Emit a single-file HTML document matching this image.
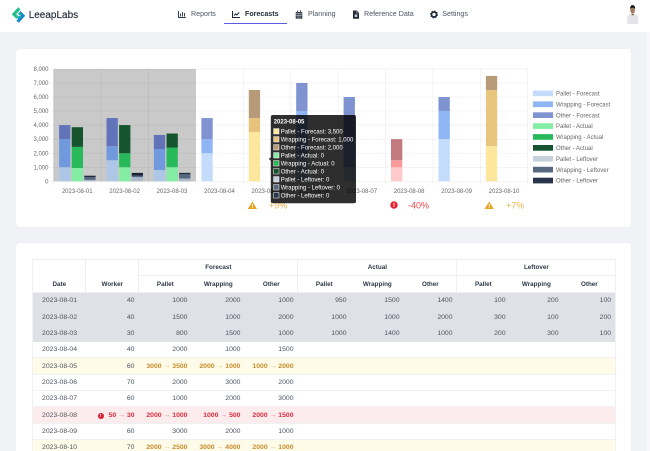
<!DOCTYPE html>
<html lang="en">
<head>
<meta charset="utf-8">
<title>LeeapLabs - Forecasts</title>
<style>
html,body{margin:0;padding:0;width:650px;height:451px;overflow:hidden;background:#f1f2f5}
body{font-family:"Liberation Sans",sans-serif;position:relative}
#wrap{position:absolute;left:0;top:0;width:650px;height:451px;overflow:hidden;filter:blur(.3px)}
.strip{position:absolute;left:647px;top:0;width:3px;height:451px;background:#f8f8fa}
.nav{position:absolute;left:0;top:0;width:650px;height:32px;background:#fff}
.brand{position:absolute;left:28.7px;top:9.5px;font-size:10px;line-height:12px;color:#1f2937;-webkit-text-stroke:.15px #1f2937}
.lnk{position:absolute;top:10.4px;font-size:7.1px;line-height:9px;color:#4b5563;white-space:nowrap}
.lnk.on{font-weight:bold;color:#1f2937}
.ico{position:absolute;top:10px;width:8px;height:9px}
.ul{position:absolute;left:224.3px;top:23.2px;width:62.4px;height:1.1px;background:#5b5be0}
.card{position:absolute;left:16px;width:615px;background:#fff;border-radius:4px;box-shadow:0 0 1px rgba(0,0,0,.06)}
#c1{top:49px;height:178px}
#c2{top:243px;height:230px}
svg{position:absolute;left:0;top:0}
table{position:absolute;left:32.3px;top:259px;width:583px;table-layout:fixed;border-collapse:collapse;font-size:6.85px;color:#4b5360;background:#fff}
th,td{padding:1px 4.3px 0;box-sizing:border-box;white-space:nowrap;overflow:hidden;line-height:8px}
th{color:#2f3846;font-weight:bold;font-size:6.3px;text-align:center;border:.5px solid #eff0f2}
th.b{vertical-align:bottom;padding-bottom:3.4px}
th.s{border-left-color:transparent;border-right-color:transparent}
th.l{border-right-color:transparent}
th.t{border-left-color:transparent}
td{text-align:right;border-bottom:.5px solid #f0f1f3}
td:first-child{border-left:.5px solid #f0f1f3}
td:last-child{border-right:.5px solid #f0f1f3}
td.d{text-align:center}
tr.g td{background:#dfe1e6;border-bottom:0}
tr.y td{background:#fefce8}
tr.r td{background:#fdeced}
.o{color:#c98a2c;font-weight:bold}
.e{color:#dc2b3c;font-weight:bold}
.a{font-weight:normal;opacity:.65}
.dot{display:inline-block;width:6px;height:6px;line-height:6px;border-radius:50%;background:#dc1f30;color:#fff;font-size:4.6px;text-align:center;vertical-align:0;margin-right:5px}
</style>
</head>
<body>
<div id="wrap">
<div class="strip"></div>
<div class="nav">
  <svg width="40" height="32" viewBox="0 0 40 32">
    <path d="M19.4 8.4 L14 14.2 L17.6 17.8" fill="none" stroke="#22c08a" stroke-width="3.2"/>
    <path d="M17.6 21.6 L23 15.8 L19.4 12.2" fill="none" stroke="#1488c8" stroke-width="3.2"/>
    <path d="M19.6 12.4 L21.4 14.2 L19.6 15.6 L17.8 13.8 Z" fill="#1fb7a4"/>
    <path d="M17.4 17.6 L19.6 15.6 L21 17.4 L18.8 19.8 Z" fill="#1a9fc0"/>
  </svg>
  <div class="brand">LeeapLabs</div>

  <svg class="ico" style="left:178px" viewBox="0 0 8 9"><path d="M.5 1v6.5H8" fill="none" stroke="#374151" stroke-width="1"/><path d="M2 3.5h1v3H2zM4 2h1v4.5H4zM6 3h1v3.5H6z" fill="#374151"/></svg>
  <div class="lnk" style="left:191px">Reports</div>

  <svg class="ico" style="left:232px" viewBox="0 0 8 9"><path d="M.5 1v6.5H8" fill="none" stroke="#1f2937" stroke-width="1"/><path d="M2 5.5 3.6 3.8 4.8 5 7.2 2.4" fill="none" stroke="#1f2937" stroke-width="1"/></svg>
  <div class="lnk on" style="left:245px">Forecasts</div>
  <div class="ul"></div>

  <svg class="ico" style="left:295px" viewBox="0 0 8 9"><path d="M2 .5h1V2h2V.5h1V2h1.3v6.8H.7V2H2z" fill="#374151"/><path d="M.7 3.6h6.6M.7 5.4h6.6M3 3.6v5M5 3.6v5" stroke="#fff" stroke-width=".35"/></svg>
  <div class="lnk" style="left:308px">Planning</div>

  <svg class="ico" style="left:351.5px" viewBox="0 0 8 9"><path d="M1 .5h3.8L7 2.7v6H1z" fill="#1f2937"/><path d="M4.6.8v2.2h2.2" fill="none" stroke="#fff" stroke-width=".4"/><path d="M2.7 4.4h2.6v2.6H2.7z" fill="#fff" opacity=".75"/></svg>
  <div class="lnk" style="left:364px">Reference Data</div>

  <svg class="ico" style="left:430px" viewBox="0 0 8 9"><circle cx="4" cy="4.5" r="2.5" fill="none" stroke="#1f2937" stroke-width="1.7"/><circle cx="4" cy="4.5" r="3.4" fill="none" stroke="#1f2937" stroke-width="1.1" stroke-dasharray="1.4 1.27"/></svg>
  <div class="lnk" style="left:442.3px">Settings</div>

  <svg width="650" height="32" viewBox="0 0 650 32">
    <path d="M627.2 24 V17.5 Q627.8 14.6 630.4 14 L634.8 14 Q637.8 15 638.2 18 L638.2 24 Z" fill="#e3e5e8"/>
    <ellipse cx="632.6" cy="10.4" rx="2.3" ry="3.4" fill="#a57a62"/>
    <path d="M630.2 9.6 Q629.8 5 632.7 5 Q635.4 5.2 635 9 L633.6 7.8 L631 8 Z" fill="#1c1a1c"/>
    <path d="M631 14h3.4l-1.7 1.6z" fill="#8a6450"/>
  </svg>
</div>

<div class="card" id="c1"></div>
<div class="card" id="c2"></div>

<svg width="650" height="240" viewBox="0 0 650 240" font-family="Liberation Sans, sans-serif">
  <!-- grey history band -->
  <rect x="53.5" y="69" width="142.3" height="112.3" fill="#c9c9c9"/>
  <!-- grid -->
  <g stroke="#000" stroke-opacity=".075" stroke-width=".6">
    <path d="M50 68.9H527.7M50 83H527.7M50 97H527.7M50 111H527.7M50 125.1H527.7M50 139.2H527.7M50 153.2H527.7M50 167.3H527.7M50 181.3H527.7"/>
    <path d="M53.5 69V185M100.9 69V185M148.3 69V185M195.8 69V185M243.2 69V185M290.6 69V185M338 69V185M385.4 69V185M432.9 69V185M480.3 69V185M527.7 69V185"/>
  </g>
  <!-- bars -->
  <g transform="translate(0,181.3) scale(1,-0.01405)">
    <g>
      <rect x="59.1" y="0" width="11.3" height="1000" fill="#aec7e6"/><rect x="59.1" y="1000" width="11.3" height="2000" fill="#7199dd"/><rect x="59.1" y="3000" width="11.3" height="1000" fill="#6373ba"/>
      <rect x="71.7" y="0" width="11.3" height="950" fill="#84eda4"/><rect x="71.7" y="950" width="11.3" height="1500" fill="#28b95b"/><rect x="71.7" y="2450" width="11.3" height="1400" fill="#15542e"/>
      <rect x="84.3" y="0" width="11.3" height="100" fill="#aab8c8"/><rect x="84.3" y="100" width="11.3" height="200" fill="#56687f"/><rect x="84.3" y="300" width="11.3" height="100" fill="#1f2c40"/>

      <rect x="106.5" y="0" width="11.3" height="1500" fill="#aec7e6"/><rect x="106.5" y="1500" width="11.3" height="1000" fill="#7199dd"/><rect x="106.5" y="2500" width="11.3" height="2000" fill="#6373ba"/>
      <rect x="119.1" y="0" width="11.3" height="1000" fill="#84eda4"/><rect x="119.1" y="1000" width="11.3" height="1000" fill="#28b95b"/><rect x="119.1" y="2000" width="11.3" height="2000" fill="#15542e"/>
      <rect x="131.7" y="0" width="11.3" height="300" fill="#aab8c8"/><rect x="131.7" y="300" width="11.3" height="100" fill="#56687f"/><rect x="131.7" y="400" width="11.3" height="200" fill="#1a2638"/>

      <rect x="153.9" y="0" width="11.3" height="800" fill="#aec7e6"/><rect x="153.9" y="800" width="11.3" height="1500" fill="#7199dd"/><rect x="153.9" y="2300" width="11.3" height="1000" fill="#6373ba"/>
      <rect x="166.5" y="0" width="11.3" height="1000" fill="#84eda4"/><rect x="166.5" y="1000" width="11.3" height="1400" fill="#28b95b"/><rect x="166.5" y="2400" width="11.3" height="1000" fill="#15542e"/>
      <rect x="179.1" y="0" width="11.3" height="200" fill="#aab8c8"/><rect x="179.1" y="200" width="11.3" height="300" fill="#56687f"/><rect x="179.1" y="500" width="11.3" height="100" fill="#1f2c40"/>
    </g>
    <g>
      <rect x="201.4" y="0" width="11.3" height="2000" fill="#c3dcfc"/><rect x="201.4" y="2000" width="11.3" height="1000" fill="#8fb5f4"/><rect x="201.4" y="3000" width="11.3" height="1500" fill="#7e93cf"/>
      <rect x="248.8" y="0" width="11.3" height="3500" fill="#fde79c"/><rect x="248.8" y="3500" width="11.3" height="1000" fill="#e6c27a"/><rect x="248.8" y="4500" width="11.3" height="2000" fill="#b79b78"/>
      <rect x="296.2" y="0" width="11.3" height="2000" fill="#c3dcfc"/><rect x="296.2" y="2000" width="11.3" height="3000" fill="#8fb5f4"/><rect x="296.2" y="5000" width="11.3" height="2000" fill="#7e93cf"/>
      <rect x="343.6" y="0" width="11.3" height="1000" fill="#c3dcfc"/><rect x="343.6" y="1000" width="11.3" height="2000" fill="#8fb5f4"/><rect x="343.6" y="3000" width="11.3" height="3000" fill="#7e93cf"/>
      <rect x="391" y="0" width="11.3" height="1000" fill="#fecaca"/><rect x="391" y="1000" width="11.3" height="500" fill="#fb9a9a"/><rect x="391" y="1500" width="11.3" height="1500" fill="#c27a7e"/>
      <rect x="438.5" y="0" width="11.3" height="3000" fill="#c3dcfc"/><rect x="438.5" y="3000" width="11.3" height="2000" fill="#8fb5f4"/><rect x="438.5" y="5000" width="11.3" height="1000" fill="#7e93cf"/>
      <rect x="485.9" y="0" width="11.3" height="2500" fill="#fde79c"/><rect x="485.9" y="2500" width="11.3" height="4000" fill="#e9c680"/><rect x="485.9" y="6500" width="11.3" height="1000" fill="#b79b78"/>
    </g>
  </g>
  <!-- y ticks -->
  <g font-size="6" fill="#666" text-anchor="end">
    <text x="48.5" y="71">8,000</text><text x="48.5" y="85">7,000</text><text x="48.5" y="99">6,000</text><text x="48.5" y="113">5,000</text><text x="48.5" y="127.2">4,000</text><text x="48.5" y="141.2">3,000</text><text x="48.5" y="155.3">2,000</text><text x="48.5" y="169.3">1,000</text><text x="48.5" y="183.4">0</text>
  </g>
  <!-- x ticks -->
  <g font-size="6" fill="#666" text-anchor="middle">
    <text x="77.2" y="192.8">2023-08-01</text><text x="124.6" y="192.8">2023-08-02</text><text x="172" y="192.8">2023-08-03</text><text x="219.5" y="192.8">2023-08-04</text><text x="266.9" y="192.8">2023-08-05</text><text x="314.3" y="192.8">2023-08-06</text><text x="361.7" y="192.8">2023-08-07</text><text x="409.1" y="192.8">2023-08-08</text><text x="456.6" y="192.8">2023-08-09</text><text x="504" y="192.8">2023-08-10</text>
  </g>
  <!-- legend -->
  <g>
    <rect x="533" y="90.5" width="20" height="5.7" fill="#c3dcfc"/><rect x="533" y="101.4" width="20" height="5.7" fill="#8fb5f4"/><rect x="533" y="112.3" width="20" height="5.7" fill="#7e93cf"/><rect x="533" y="123.2" width="20" height="5.7" fill="#84eda4"/><rect x="533" y="134.1" width="20" height="5.7" fill="#28b95b"/><rect x="533" y="145" width="20" height="5.7" fill="#15542e"/><rect x="533" y="155.9" width="20" height="5.7" fill="#c5d0da"/><rect x="533" y="166.8" width="20" height="5.7" fill="#56687f"/><rect x="533" y="177.7" width="20" height="5.7" fill="#29354b"/>
  </g>
  <g font-size="6" fill="#666">
    <text x="556" y="95.5">Pallet - Forecast</text><text x="556" y="106.4">Wrapping - Forecast</text><text x="556" y="117.3">Other - Forecast</text><text x="556" y="128.2">Pallet - Actual</text><text x="556" y="139.1">Wrapping - Actual</text><text x="556" y="150">Other - Actual</text><text x="556" y="160.9">Pallet - Leftover</text><text x="556" y="171.8">Wrapping - Leftover</text><text x="556" y="182.7">Other - Leftover</text>
  </g>
  <!-- alerts -->
  <path d="M252.4 201.6 L257 209 H247.8 Z" fill="#e8a21c"/><rect x="252" y="204" width=".9" height="2.6" fill="#fff"/><rect x="252" y="207.1" width=".9" height=".9" fill="#fff"/>
  <text x="269" y="208.5" font-size="9" fill="#f0b34a">+9%</text>
  <circle cx="394" cy="205" r="3.7" fill="#e5202e"/><rect x="393.5" y="202.8" width="1" height="2.8" fill="#fff"/><rect x="393.5" y="206.1" width="1" height="1" fill="#fff"/>
  <text x="408" y="208.5" font-size="9" fill="#ef4444">-40%</text>
  <path d="M489.2 201.6 L493.8 209 H484.6 Z" fill="#e8a21c"/><rect x="488.8" y="204" width=".9" height="2.6" fill="#fff"/><rect x="488.8" y="207.1" width=".9" height=".9" fill="#fff"/>
  <text x="506" y="208.5" font-size="9" fill="#f0b34a">+7%</text>
  <!-- tooltip -->
  <path d="M268.8 159 L270.8 157 V161 Z" fill="rgba(0,0,0,.8)"/>
  <rect x="270.8" y="115" width="85.2" height="88.3" rx="2" fill="#000" fill-opacity=".82"/>
  <text x="273.7" y="123.5" font-size="6" font-weight="bold" fill="#fff">2023-08-05</text>
  <g stroke="#fff" stroke-width=".5">
    <rect x="273.6" y="128.6" width="5.4" height="5.4" fill="#fde79c"/><rect x="273.6" y="136.6" width="5.4" height="5.4" fill="#e6c27a"/><rect x="273.6" y="144.6" width="5.4" height="5.4" fill="#b79b78"/><rect x="273.6" y="152.6" width="5.4" height="5.4" fill="#84eda4"/><rect x="273.6" y="160.6" width="5.4" height="5.4" fill="#28b95b"/><rect x="273.6" y="168.6" width="5.4" height="5.4" fill="#15542e"/><rect x="273.6" y="176.6" width="5.4" height="5.4" fill="#c5d0da"/><rect x="273.6" y="184.6" width="5.4" height="5.4" fill="#56687f"/><rect x="273.6" y="192.6" width="5.4" height="5.4" fill="#29354b"/>
  </g>
  <g font-size="6" fill="#fff">
    <text x="280.7" y="133.4">Pallet - Forecast: 3,500</text><text x="280.7" y="141.4">Wrapping - Forecast: 1,000</text><text x="280.7" y="149.4">Other - Forecast: 2,000</text><text x="280.7" y="157.4">Pallet - Actual: 0</text><text x="280.7" y="165.4">Wrapping - Actual: 0</text><text x="280.7" y="173.4">Other - Actual: 0</text><text x="280.7" y="181.4">Pallet - Leftover: 0</text><text x="280.7" y="189.4">Wrapping - Leftover: 0</text><text x="280.7" y="197.4">Other - Leftover: 0</text>
  </g>
</svg>

<table>
<colgroup><col style="width:53px"><col style="width:53px"><col style="width:53px"><col style="width:53px"><col style="width:53px"><col style="width:53px"><col style="width:53px"><col style="width:53px"><col style="width:53px"><col style="width:53px"><col style="width:53px"></colgroup>
<thead>
<tr style="height:16px"><th rowspan="2" class="b">Date</th><th rowspan="2" class="b">Worker</th><th colspan="3">Forecast</th><th colspan="3">Actual</th><th colspan="3">Leftover</th></tr>
<tr style="height:17px"><th class="l">Pallet</th><th class="s">Wrapping</th><th class="t">Other</th><th class="l">Pallet</th><th class="s">Wrapping</th><th class="t">Other</th><th class="l">Pallet</th><th class="s">Wrapping</th><th class="t">Other</th></tr>
</thead>
<tbody>
<tr class="g" style="height:16px"><td class="d">2023-08-01</td><td>40</td><td>1000</td><td>2000</td><td>1000</td><td>950</td><td>1500</td><td>1400</td><td>100</td><td>200</td><td>100</td></tr>
<tr class="g" style="height:17px"><td class="d">2023-08-02</td><td>40</td><td>1500</td><td>1000</td><td>2000</td><td>1000</td><td>1000</td><td>2000</td><td>300</td><td>100</td><td>200</td></tr>
<tr class="g" style="height:16px"><td class="d">2023-08-03</td><td>30</td><td>800</td><td>1500</td><td>1000</td><td>1000</td><td>1400</td><td>1000</td><td>200</td><td>300</td><td>100</td></tr>
<tr style="height:16px"><td class="d">2023-08-04</td><td>40</td><td>2000</td><td>1000</td><td>1500</td><td></td><td></td><td></td><td></td><td></td><td></td></tr>
<tr class="y" style="height:17px"><td class="d">2023-08-05</td><td>60</td><td class="o">3000 <span class="a">→</span> 3500</td><td class="o">2000 <span class="a">→</span> 1000</td><td class="o">1000 <span class="a">→</span> 2000</td><td></td><td></td><td></td><td></td><td></td><td></td></tr>
<tr style="height:16px"><td class="d">2023-08-06</td><td>70</td><td>2000</td><td>3000</td><td>2000</td><td></td><td></td><td></td><td></td><td></td><td></td></tr>
<tr style="height:16px"><td class="d">2023-08-07</td><td>60</td><td>1000</td><td>2000</td><td>3000</td><td></td><td></td><td></td><td></td><td></td><td></td></tr>
<tr class="r" style="height:17px"><td class="d">2023-08-08</td><td class="e"><span class="dot">!</span>50 <span class="a">→</span> 30</td><td class="e">2000 <span class="a">→</span> 1000</td><td class="e">1000 <span class="a">→</span> 500</td><td class="e">2000 <span class="a">→</span> 1500</td><td></td><td></td><td></td><td></td><td></td><td></td></tr>
<tr style="height:16px"><td class="d">2023-08-09</td><td>60</td><td>3000</td><td>2000</td><td>1000</td><td></td><td></td><td></td><td></td><td></td><td></td></tr>
<tr class="y" style="height:16px"><td class="d">2023-08-10</td><td>70</td><td class="o">2000 <span class="a">→</span> 2500</td><td class="o">3000 <span class="a">→</span> 4000</td><td class="o">2000 <span class="a">→</span> 1000</td><td></td><td></td><td></td><td></td><td></td><td></td></tr>
</tbody>
</table>
</div>
</body>
</html>
